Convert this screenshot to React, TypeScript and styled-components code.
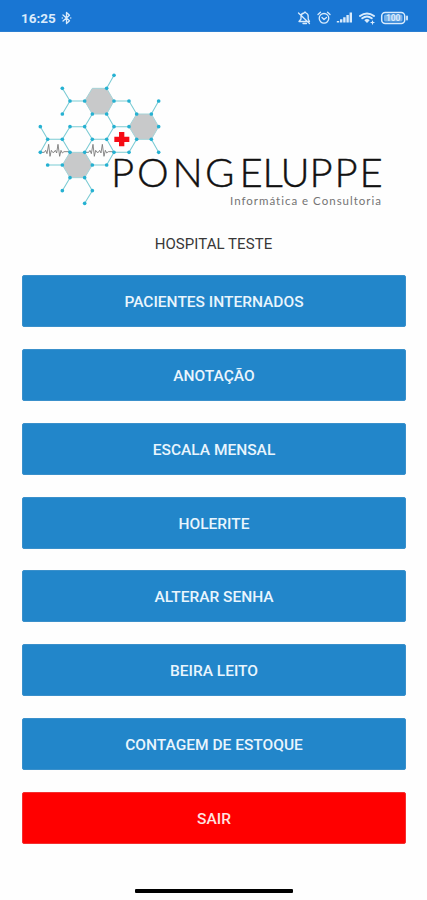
import React from "react";
import styled, { createGlobalStyle } from "styled-components";

const GlobalStyle = createGlobalStyle`
  body { margin: 0; background: #fefefe; font-family: Roboto, "Liberation Sans", sans-serif; }
`;

const Screen = styled.div`
  height: 900px;
  display: flex;
  flex-direction: column;
  overflow: hidden;
`;

const StatusBar = styled.header`
  height: 32px;
  flex: none;
  box-sizing: border-box;
  padding: 4px 18px 0 21px;
  display: flex;
  align-items: center;
  justify-content: space-between;
  background: #1976d3;
  border-bottom: 1px solid #2b7fd2;
  color: #d9ebfc;
`;

const Clock = styled.div`
  display: flex;
  align-items: center;
  gap: 5px;
  font-size: 13.5px;
  font-weight: 700;
`;

const StatusIcons = styled.div`
  display: flex;
  align-items: center;
`;

const Icon = styled.svg`
  display: block;
  fill: none;
  stroke: currentColor;
  stroke-width: 1.3;
  stroke-linecap: round;
  stroke-linejoin: round;
`;

const Logo = styled.svg`
  display: block;
  flex: none;
  width: 360px;
  height: 150px;
  margin: 33px 0 0 30px;
`;

const Brand = styled.text`
  font-family: Lato, sans-serif;
  font-weight: 300;
  font-size: 40px;
  fill: #111;
  stroke: #111;
  stroke-width: 0.45px;
`;

const Tagline = styled.text`
  font-family: Lato, sans-serif;
  font-size: 11.5px;
  font-variant-ligatures: none;
  fill: #747474;
`;

const Hospital = styled.h1`
  margin: 20px 0 0;
  height: 18px;
  line-height: 18px;
  text-align: center;
  font-size: 15px;
  font-weight: 400;
  letter-spacing: 0.05px;
  color: #383838;
`;

const Menu = styled.nav`
  display: flex;
  flex-direction: column;
  gap: 21.8px;
  padding: 22.3px 21px 0 22px;
`;

const MenuButton = styled.button<{ $danger?: boolean }>`
  height: 52px;
  flex: none;
  padding: 2px 0 0;
  border: 1px solid ${(p) => (p.$danger ? "#f33030" : "#3a90cb")};
  border-radius: 2px;
  background: ${(p) => (p.$danger ? "#ff0000" : "#2286ca")};
  color: ${(p) => (p.$danger ? "#ffe3e0" : "#e9f5fd")};
  font: 500 15.5px/48px Roboto, "Liberation Sans", sans-serif;
`;

const HomeBar = styled.div`
  width: 158px;
  height: 4px;
  margin: 45.5px auto 0;
  border-radius: 1px;
  background: #000;
`;

const links =
  "M252 31L230 70M97 70L120 108L97 147M120 108H164M252 108H297L320 147M364 147L386 108M364 223L386 262" +
  "M187 147L164 185L187 223H230L252 185L230 147M252 185H297M320 223L297 262H252L230 223" +
  "M164 185H120L97 223L120 262M164 262L187 223M31 185L53 223H97M53 223L31 262" +
  "M97 300H53M187 300H230L252 262M120 338L97 377M164 338L187 377L164 415";

const cells = [
  "187,70 230,70 252,108 230,147 187,147 164,108",
  "320,147 364,147 386,185 364,223 320,223 297,185",
  "120,262 164,262 187,300 164,338 120,338 97,300",
];

const nodes = [
  [252, 31], [97, 70], [230, 70], [120, 108], [164, 108], [252, 108], [297, 108], [386, 108],
  [97, 147], [187, 147], [230, 147], [320, 147], [364, 147], [31, 185], [120, 185], [164, 185],
  [252, 185], [297, 185], [386, 185], [53, 223], [97, 223], [187, 223], [230, 223], [320, 223],
  [364, 223], [31, 262], [120, 262], [164, 262], [252, 262], [297, 262], [386, 262], [53, 300],
  [97, 300], [187, 300], [230, 300], [120, 338], [164, 338], [97, 377], [187, 377], [164, 415],
];

const pulse = "h12l4 -6l4 10l5 -28l4 36l4 -18l4 6h4l4 -6l4 8l4 -26l5 36l4 -18l4 8l5 -4h15";

const BrandLogo = () => (
  <Logo viewBox="0 0 360 150" role="img" aria-label="Pongeluppe">
    <g transform="scale(.33333)">
      {cells.map((c) => (
        <polygon key={c} points={c} fill="#c8c9ca" stroke="#a5d3d7" strokeWidth="3" />
      ))}
      <path d={links} fill="none" stroke="#7bcbd4" strokeWidth="3.2" />
      <path d={`M31 262${pulse}M164 262${pulse}`} fill="none" stroke="#777" strokeWidth="2.6" />
      {nodes.map(([x, y]) => (
        <circle key={`${x}-${y}`} cx={x} cy={y} r="5.5" fill="#25b1d2" />
      ))}
      <path d="M267 201h16v14h15v16h-15v13h-16v-13h-14v-16h14z" fill="#f60b14" />
    </g>
    <Brand x="81 107 142.5 175 209.5 232.5 250.5 279.5 304.5 329.5" y="121.5">PONGELUPPE</Brand>
    <Tagline x="200" y="139.5" textLength="151">Informática e Consultoria</Tagline>
  </Logo>
);

const Bluetooth = () => (
  <Icon width="11" height="14" viewBox="0 0 10 14">
    <path d="M1.5 4L8 9.7L5 12.5V1.5L8 4.3L1.5 10M.7 7h.1M9.2 7h.1" />
  </Icon>
);

const StatusGlyphs = () => (
  <Icon width="113" height="16" viewBox="296 10 113 16">
    <path d="M299 21.5L301 19V16.5Q301 13.5 304 13L305 12L306 13Q308.5 14 308.2 17V19L309.5 21.5ZM303 23.5H306.5M298.5 13L309.5 23.5" />
    <circle cx="324" cy="18.3" r="4.8" />
    <path d="M318 14.5L320.5 12.2M327.5 12.2L330 14.5M322 17.5L324 19.5L326.5 17.5" />
    <path d="M338 22.6V21M341.2 22.6V19.3M344.4 22.6V17.3M347.6 22.6V15M350.8 22.6V12.4" strokeWidth="2.4" strokeLinecap="butt" />
    <path d="M360 16Q367 10.8 374 16M362.3 18.3Q367 14.8 371.7 18.3" strokeWidth="2" />
    <path d="M364.3 20.2Q367 18 369.7 20.2L367 23Z" fill="currentColor" stroke="none" />
    <path d="M372.5 21V24M371 22.5H374" strokeWidth="1.2" />
    <rect x="381.7" y="12.5" width="23" height="11" rx="3.5" strokeWidth="1.5" />
    <path d="M407 16.5V19.5" strokeWidth="1.8" />
    <rect x="384" y="14.4" width="18.5" height="7.2" rx="1.5" fill="currentColor" fillOpacity=".5" stroke="none" />
    <text x="386" y="21.4" fontSize="8.5" fontWeight="700" fill="currentColor" stroke="none" textLength="14.5">100</text>
  </Icon>
);

const items = [
  "PACIENTES INTERNADOS",
  "ANOTAÇÃO",
  "ESCALA MENSAL",
  "HOLERITE",
  "ALTERAR SENHA",
  "BEIRA LEITO",
  "CONTAGEM DE ESTOQUE",
];

export default function App() {
  return (
    <Screen>
      <GlobalStyle />
      <StatusBar>
        <Clock>
          16:25
          <Bluetooth />
        </Clock>
        <StatusIcons>
          <StatusGlyphs />
        </StatusIcons>
      </StatusBar>
      <BrandLogo />
      <Hospital>HOSPITAL TESTE</Hospital>
      <Menu>
        {items.map((label) => (
          <MenuButton key={label}>{label}</MenuButton>
        ))}
        <MenuButton $danger>SAIR</MenuButton>
      </Menu>
      <HomeBar />
    </Screen>
  );
}
